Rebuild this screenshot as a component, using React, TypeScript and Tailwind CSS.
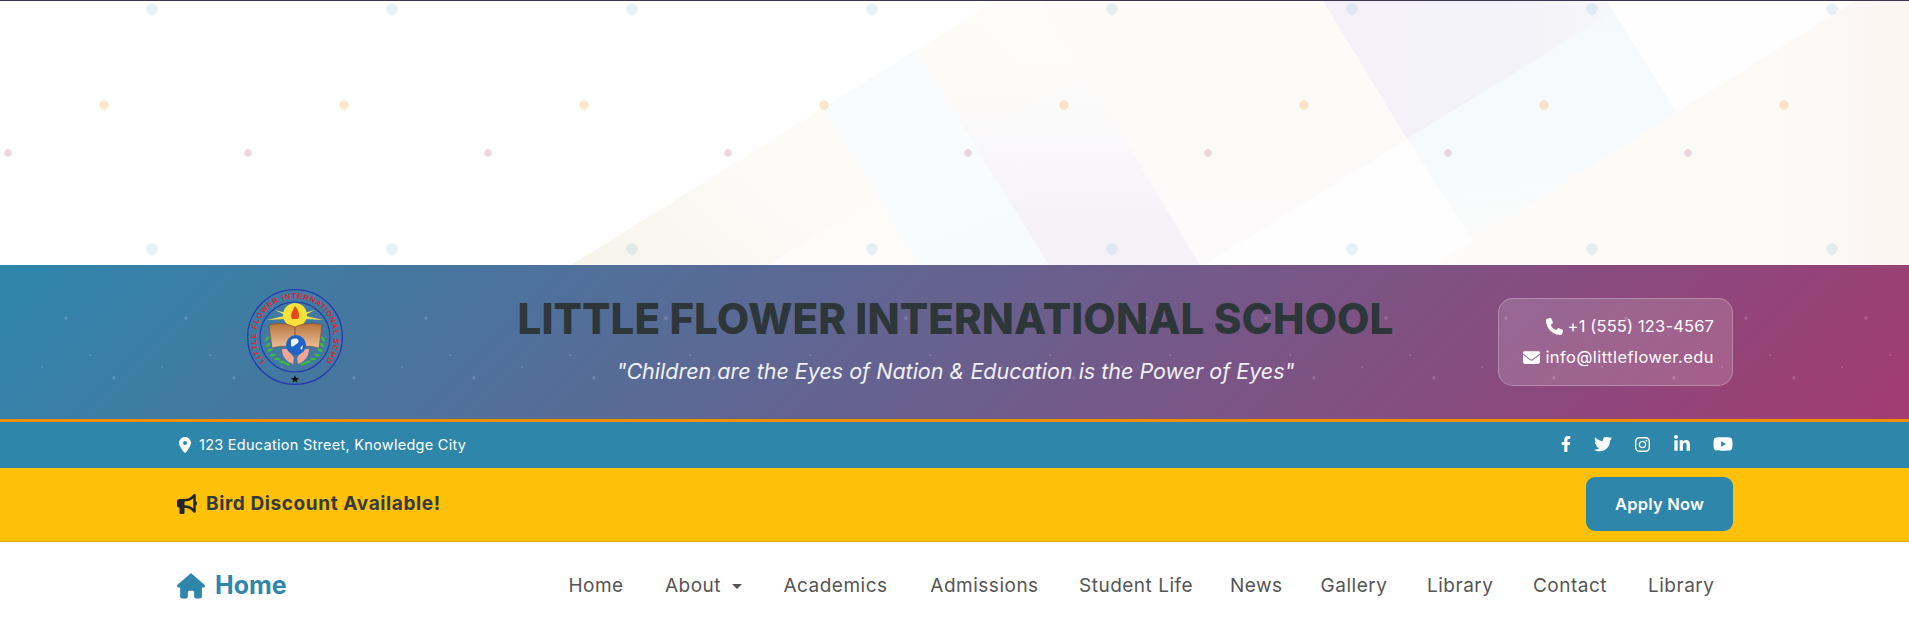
import React from "react";
import { FaFacebookF, FaInstagram, FaLinkedinIn, FaTwitter, FaYoutube } from "react-icons/fa";
import { FaBullhorn, FaEnvelope, FaHouse, FaLocationDot, FaPhone } from "react-icons/fa6";

// Poppins is not installed, so each link keeps the box it has in the design
const navLinks = [
  { label: "Home", width: "w-[58px]" },
  { label: "About", width: "w-[58px]", caret: true },
  { label: "Academics", width: "w-[109px]" },
  { label: "Admissions", width: "w-[111px]" },
  { label: "Student Life", width: "w-[112px]" },
  { label: "News", width: "w-[51px]" },
  { label: "Gallery", width: "w-[68px]" },
  { label: "Library", width: "w-[65px]" },
  { label: "Contact", width: "w-[78px]" },
  { label: "Library", width: "w-[65px]" },
];

const HeroShapes = () => (
  <svg className="absolute inset-0 h-full w-full" viewBox="0 0 1909 264" preserveAspectRatio="none" aria-hidden="true">
    <defs>
      <clipPath id="rightOfDiagonal">
        <polygon points="571,264 995,0 1909,0 1909,264" />
      </clipPath>
      <linearGradient id="cream" x1="0" y1="1" x2="1" y2="0.5">
        <stop offset="0" stopColor="#f7f4eb" />
        <stop offset="0.4" stopColor="#fcfbf8" />
        <stop offset="1" stopColor="#fdfcf9" />
      </linearGradient>
      <linearGradient id="paleBlue" x1="0" y1="0" x2="0.4" y2="1">
        <stop offset="0" stopColor="#f6f9fc" />
        <stop offset="0.6" stopColor="#fafbfd" />
        <stop offset="1" stopColor="#f8fbfc" />
      </linearGradient>
      <linearGradient id="purpleUp" x1="0" y1="0" x2="0" y2="1">
        <stop offset="0.25" stopColor="#f5f3f8" stopOpacity="0" />
        <stop offset="0.85" stopColor="#f5f3f8" stopOpacity="1" />
      </linearGradient>
      <linearGradient id="purpleSide" x1="0" y1="0" x2="1" y2="0">
        <stop offset="0" stopColor="#f4f2f8" />
        <stop offset="0.6" stopColor="#f3f2f8" />
        <stop offset="1" stopColor="#f7f8fb" />
      </linearGradient>
      <linearGradient id="creamDown" x1="0" y1="0" x2="0" y2="1">
        <stop offset="0" stopColor="#fdfbf7" stopOpacity="1" />
        <stop offset="1" stopColor="#fbf9fa" stopOpacity="0.6" />
      </linearGradient>
      <linearGradient id="blueStrip" x1="0" y1="0" x2="0.2" y2="1">
        <stop offset="0" stopColor="#f5f9fc" />
        <stop offset="0.7" stopColor="#f7fafc" />
        <stop offset="1" stopColor="#fcfbf9" />
      </linearGradient>
      <linearGradient id="warmRight" x1="0" y1="0" x2="1" y2="0">
        <stop offset="0" stopColor="#fdfcfa" />
        <stop offset="0.8" stopColor="#fcf9f6" />
        <stop offset="1" stopColor="#fbf4f1" />
      </linearGradient>
    </defs>
    <g clipPath="url(#rightOfDiagonal)">
      <rect x="571" width="1338" height="264" fill="#fdfcfb" />
      <polygon points="571,264 995,0 1195,0 768,264" fill="url(#cream)" />
      <polygon points="758,0 885,0 1049,264 920,264" fill="url(#paleBlue)" />
      <polygon points="885,0 1042,0 1200,264 1049,264" fill="url(#purpleUp)" />
      <polygon points="1042,0 1323,0 1488,264 1200,264" fill="url(#creamDown)" />
      <polygon points="1323,0 1607,0 1772,264 1488,264" fill="url(#blueStrip)" />
      <polygon points="1323,0 1631,0 1407,138" fill="url(#purpleSide)" />
      <polygon points="1204,264 1407,138 1488,264" fill="#fefeff" />
      <polygon points="1607,0 1909,0 1909,264 1772,264" fill="#fefeff" />
      <polygon points="1433,264 1855,0 1909,0 1909,264" fill="url(#warmRight)" />
    </g>
  </svg>
);

const leafMarks = [
  [-28, 2], [-27, 8], [-25, 13], [-22, 18], [-18, 22], [-13, 25], [-8, 27],
];

const SchoolLogo = () => (
  <svg width="98" height="98" viewBox="-49 -49 98 98" aria-label="Little Flower International School logo">
    <defs>
      <path id="logoArc" d="M-30.5 24.5 A39 39 0 1 1 30.5 24.5" fill="none" />
      <linearGradient id="bookFill" x1="0" y1="0" x2="0" y2="1">
        <stop offset="0" stopColor="#b9743d" />
        <stop offset="1" stopColor="#ecc49c" />
      </linearGradient>
    </defs>
    <circle r="47.4" fill="none" stroke="#2438b0" strokeWidth="1.2" />
    <circle r="35" fill="none" stroke="#2438b0" strokeWidth="1.1" />
    <text fill="#e3222b" fontFamily="Liberation Sans, sans-serif" fontSize="7.4" fontWeight="700" letterSpacing="0.95">
      <textPath href="#logoArc">LITTLE FLOWER INTERNATIONAL SCHOOL</textPath>
    </text>
    {/* sun and rays */}
    <path d="M-28 -17 L-11 -21 L-10 -18Z M-20 -27 L-9 -24 L-10 -22Z M28 -17 L11 -21 L10 -18Z M20 -27 L9 -24 L10 -22Z" fill="#f6e04a" />
    <circle cy="-22" r="12" fill="#f9e23a" />
    <path d="M0 -31 C4 -26 5 -22 3 -18 L-3 -18 C-5 -22 -3 -25 0 -31Z" fill="#e8491d" />
    {/* open book */}
    <path d="M-26 -12 C-16 -15 -6 -13 0 -10 C6 -13 16 -15 27 -12 L24 11 C14 8 6 9 0 12 C-6 9 -14 8 -23 11Z" fill="url(#bookFill)" stroke="#7b3f1c" strokeWidth="0.5" />
    <path d="M0 -10 V12" stroke="#7b3f1c" strokeWidth="0.7" />
    {/* laurel */}
    {leafMarks.map(([x, y], i) => (
      <g key={i} fill="#3dbb3f">
        <ellipse cx={x} cy={y} rx="3" ry="1.3" transform={`rotate(${-50 + i * 12} ${x} ${y})`} />
        <ellipse cx={-x} cy={y} rx="3" ry="1.3" transform={`rotate(${50 - i * 12} ${-x} ${y})`} />
      </g>
    ))}
    {/* hands and globe */}
    <path d="M-13 12 C-13 20 -8 25 -2 27 L-1 21 L-7 12Z M14 12 C14 20 9 25 3 27 L2 21 L8 12Z" fill="#f0a595" />
    <circle cx="1" cy="8" r="10" fill="#1f63c8" />
    <path d="M-4 3 C1 0 5 2 3 6 C0 7 -1 11 -4 9Z M5 11 L8 8 L7 13Z" fill="#eaf3ff" />
    <path d="M0 38 L1.1 41 L4.2 41 L1.7 42.9 L2.6 46 L0 44.1 L-2.6 46 L-1.7 42.9 L-4.2 41 L-1.1 41Z" fill="#111" />
  </svg>
);

export default function App() {
  return (
    <div className="h-[622px] overflow-hidden bg-white font-['Inter',sans-serif]">
      <div className="h-px bg-[#3d3650]" />

      {/* hero */}
      <div className="relative h-[264px] bg-white">
        <HeroShapes />
        <div className="absolute inset-0 -top-px bg-[radial-gradient(circle_at_152px_9px,rgba(46,134,171,0.11)_5.5px,transparent_6px),radial-gradient(circle_at_104px_105px,rgba(241,143,1,0.2)_4.5px,transparent_5px),radial-gradient(circle_at_8px_153px,rgba(162,59,114,0.2)_3.5px,transparent_4px)] bg-[size:240px_240px]" />
      </div>

      {/* school header */}
      <header className="relative h-[157px] border-b-[3px] border-[#f18f01] bg-[linear-gradient(135deg,#2e86ab_0%,#a23b72_100%)]">
        <div className="absolute inset-0 bg-[radial-gradient(circle_at_66px_53px,rgba(255,255,255,0.14)_1.5px,transparent_2px),radial-gradient(circle_at_90px_90px,rgba(255,255,255,0.12)_1px,transparent_1.5px),radial-gradient(circle_at_42px_102px,rgba(255,255,255,0.12)_1px,transparent_1.5px),radial-gradient(circle_at_114px_113px,rgba(255,255,255,0.14)_1.5px,transparent_2px)] bg-[size:120px_154px]" />
        <div className="relative flex h-full items-center pl-[177px] pr-[176px]">
          <div className="flex w-[236px] justify-center pb-[11px]">
            <SchoolLogo />
          </div>
          <div className="flex-1 pb-[4px] text-center">
            <h1 className="text-[42px] leading-[50px] font-extrabold tracking-[0.1px] text-[#2d3638]">
              LITTLE FLOWER INTERNATIONAL SCHOOL
            </h1>
            <p className="mt-[11px] text-[21.5px] leading-[32px] italic text-[#f1f0f6]">
              "Children are the Eyes of Nation &amp; Education is the Power of Eyes"
            </p>
          </div>
          <div className="flex h-[88px] w-[235px] flex-col items-end justify-center gap-[10px] rounded-[15px] border border-white/25 bg-white/15 pr-[18px] pb-px text-[16.5px] leading-[21px] text-white">
            <div className="flex items-center gap-[5px] tracking-[0.15px]">
              <FaPhone className="text-[17px]" />
              <span>+1 (555) 123-4567</span>
            </div>
            <div className="flex items-center gap-[5px] tracking-[0.45px]">
              <FaEnvelope className="text-[17px]" />
              <span>info@littleflower.edu</span>
            </div>
          </div>
        </div>
      </header>

      {/* address bar */}
      <div className="flex h-[46px] items-center justify-between bg-[#2e86ab] pl-[177px] pr-[176px] text-white">
        <div className="flex items-center gap-[6px] text-[14.5px] tracking-[0.27px]">
          <FaLocationDot className="text-[16px]" />
          <span>123 Education Street, Knowledge City</span>
        </div>
        <div className="flex items-center gap-[22px] pb-[2px] text-[16px]">
          <FaFacebookF className="-mr-[2px]" />
          <FaTwitter className="text-[18px]" />
          <FaInstagram className="text-[17px]" />
          <FaLinkedinIn className="text-[18px]" />
          <FaYoutube className="text-[20px]" />
        </div>
      </div>

      {/* offer bar */}
      <div className="flex h-[74px] items-center justify-between border-b border-[#e0aa0a] bg-[#ffc107] pl-[177px] pr-[176px] pb-px">
        <div className="flex items-center gap-[9px] text-[19px] font-bold tracking-[0.6px] text-[#343a40]">
          <FaBullhorn className="text-[20px] text-[#212529]" />
          <span>Bird Discount Available!</span>
        </div>
        <button className="h-[54px] w-[147px] rounded-[9px] bg-[#2e86ab] text-[16.5px] font-semibold tracking-[0.2px] text-white">
          Apply Now
        </button>
      </div>

      {/* main nav */}
      <nav className="flex h-[80px] items-center justify-between pl-[177px] pr-[196px] pt-[8px]">
        <a className="flex items-center gap-[10px] text-[25px] font-bold text-[#2e86ab]">
          <FaHouse className="text-[28px]" />
          Home
        </a>
        <ul className="flex items-center gap-[39px] text-[19px] tracking-[0.5px] text-[#555555]">
          {navLinks.map((link, i) => (
            <li key={i} className="flex items-center gap-[10px] whitespace-nowrap">
              <span className={`${link.width} text-center`}>{link.label}</span>
              {link.caret && <span className="h-0 w-0 border-x-[5px] border-t-[5px] border-x-transparent border-t-[#555555]" />}
            </li>
          ))}
        </ul>
      </nav>
    </div>
  );
}
